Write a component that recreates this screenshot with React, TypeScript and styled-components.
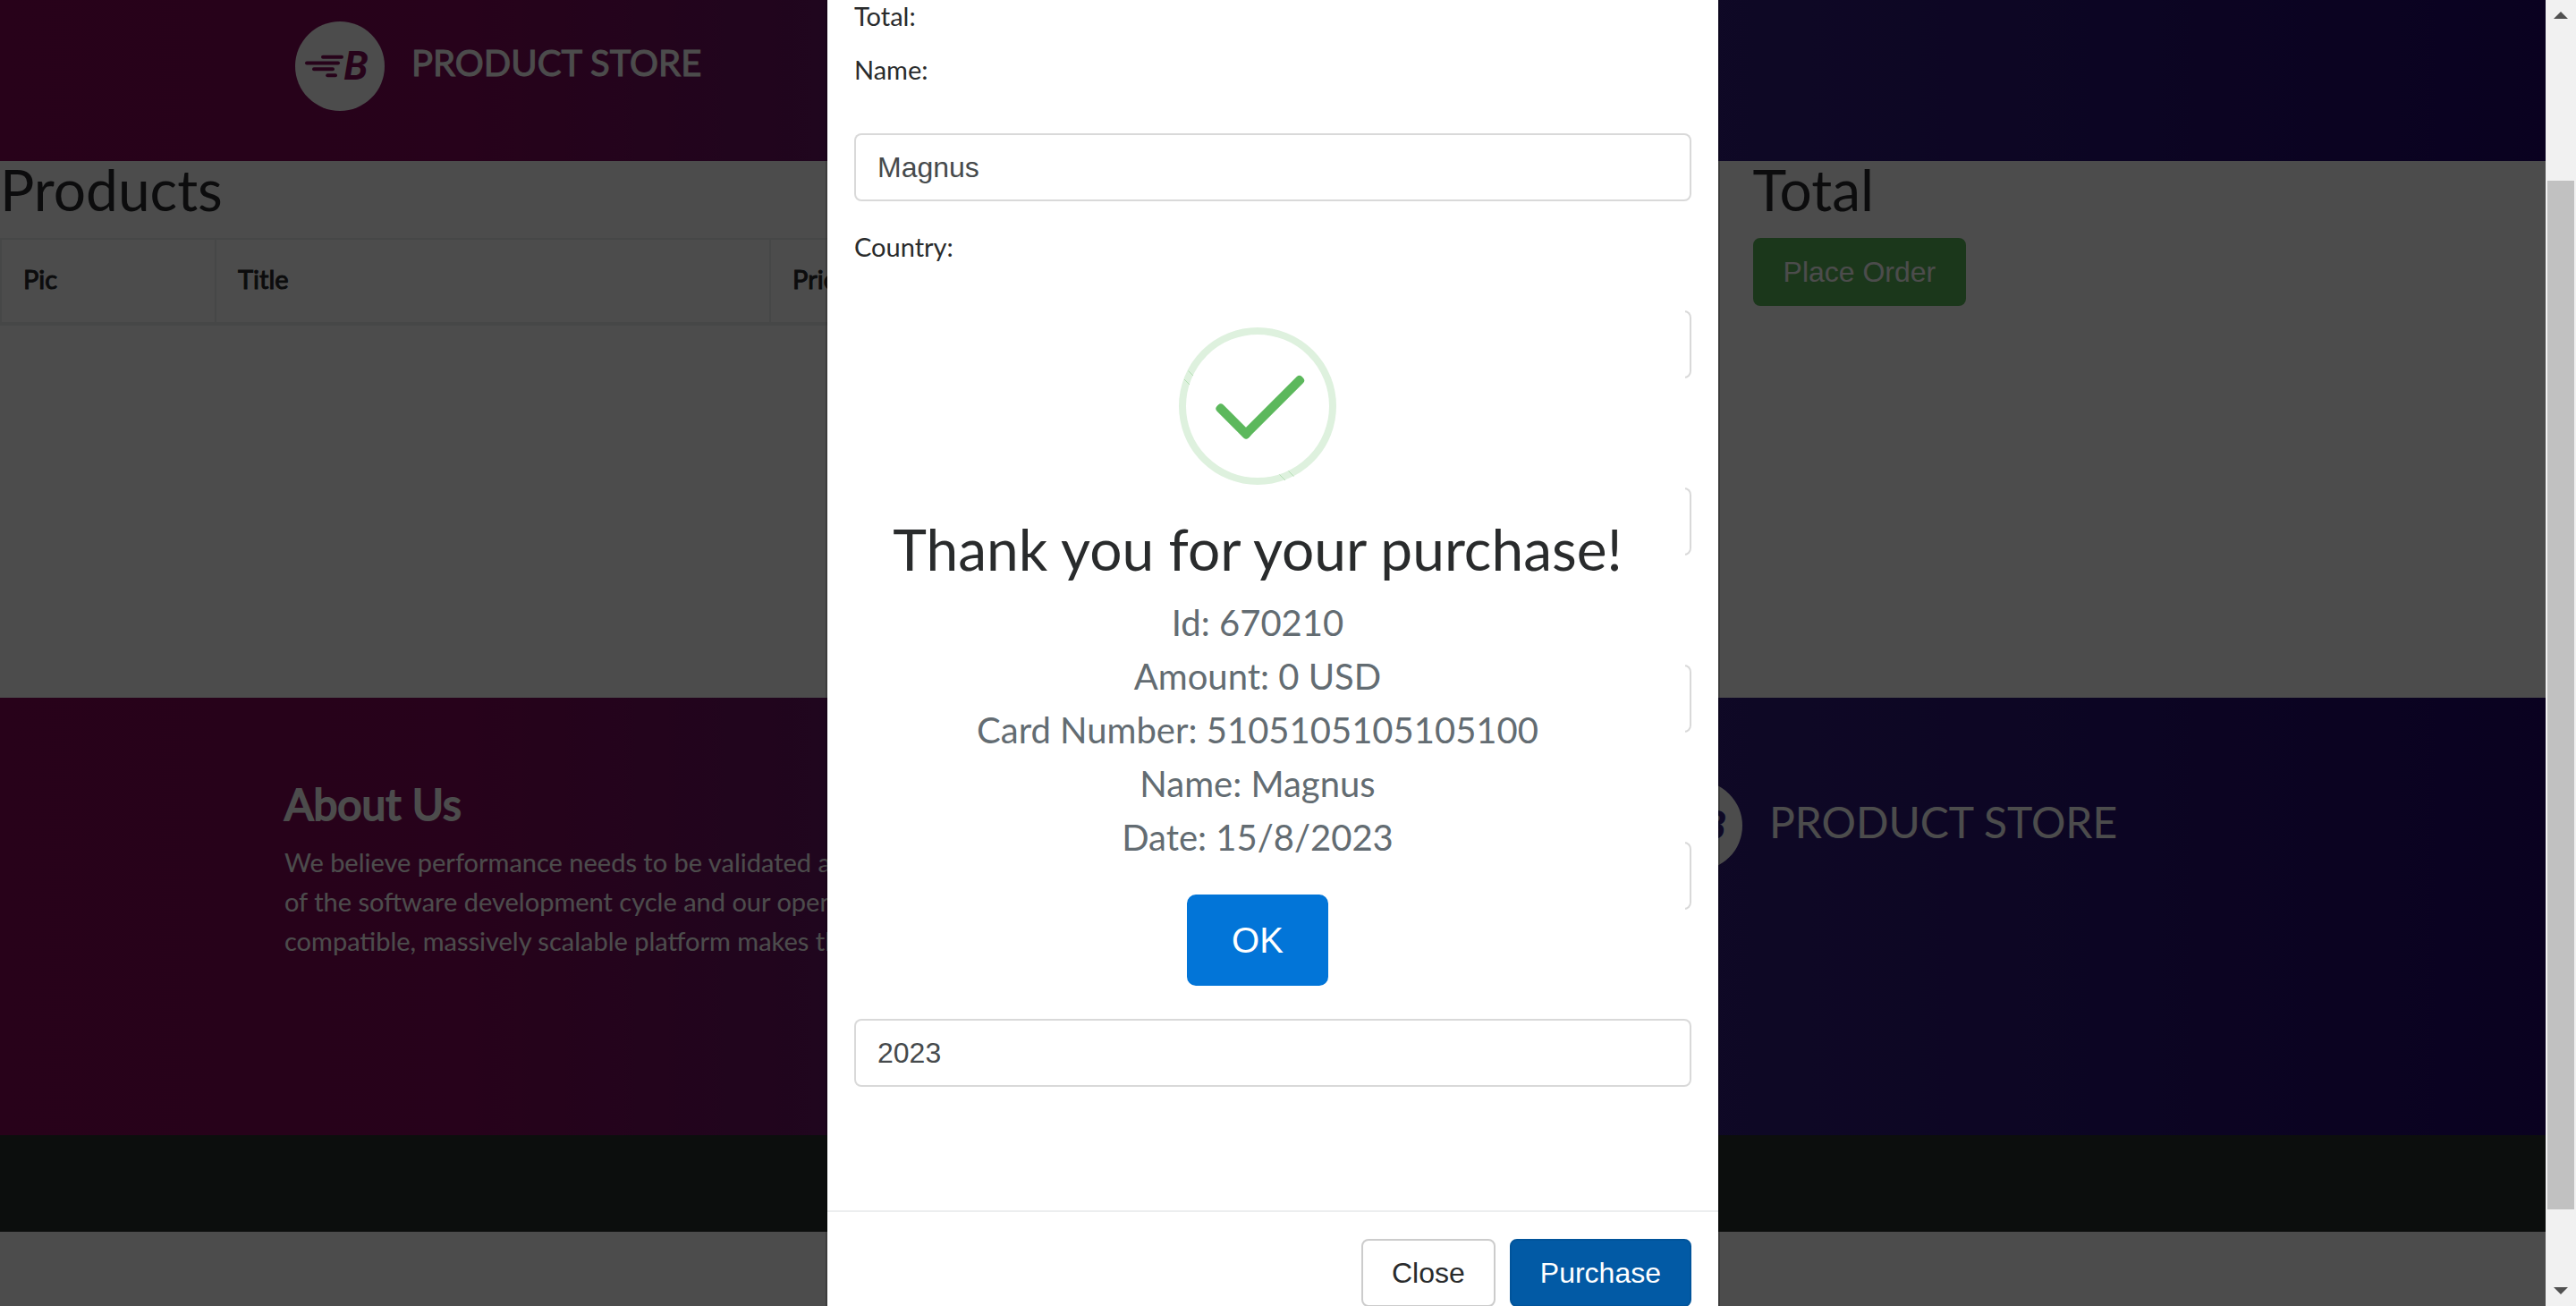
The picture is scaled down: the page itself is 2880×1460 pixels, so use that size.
import React from "react";
import styled, { createGlobalStyle } from "styled-components";

const lato = `Lato, "Noto Sans", sans-serif`;
const arial = `"Liberation Sans", Arial, sans-serif`;
const ink = "#292b2c";

const GlobalStyle = createGlobalStyle`
  *, *::before, *::after { box-sizing: border-box; }
  body {
    margin: 0;
    background: #fff;
    color: ${ink};
    font-family: ${lato};
    font-size: 29px;
    line-height: 36px;
  }
  h1, h2, h3, p { margin: 0; font-weight: 400; }
`;

/* ---------- window frame ---------- */

const Window = styled.div`
  display: flex;
  height: 100vh;
  overflow: hidden;
`;

const Viewport = styled.div`
  position: relative;
  flex: 1;
  overflow: hidden;
`;

const Scrollbar = styled.div`
  display: flex;
  flex-direction: column;
  width: 34px;
  padding: 0 2px;
  background: #f1f1f1;
`;

const ScrollArrow = styled.div<{ $down?: boolean }>`
  display: flex;
  align-items: center;
  justify-content: center;
  height: 34px;

  &::before {
    content: "";
    border: 8px solid transparent;
    border-top: ${(p) => (p.$down ? "8px solid #505050" : "0")};
    border-bottom: ${(p) => (p.$down ? "0" : "8px solid #505050")};
  }
`;

const ScrollGap = styled.div<{ $share: number }>`
  flex: ${(p) => p.$share};
`;

const ScrollThumb = styled.div`
  flex: 1150;
  background: #c1c1c1;
`;

/* ---------- store page ---------- */

const brandGradient = `linear-gradient(90deg, #850757 0%, #83085a 18%, #6b1464 32%, #321e7f 67%, #22066c 100%)`;

const Header = styled.header`
  height: 180px;
  background: ${brandGradient};
`;

const HeaderInner = styled.div`
  max-width: 2280px;
  margin: 0 auto;
  padding: 24px 47px;
`;

const Brand = styled.a<{ $large?: boolean }>`
  display: flex;
  align-items: flex-start;
  gap: 30px;
  color: #fff;
  font-size: ${(p) => (p.$large ? 48 : 40)}px;
  -webkit-text-stroke: ${(p) => (p.$large ? 0 : 1)}px #fff;
  line-height: 92px;
  text-decoration: none;
`;

const LogoMark = styled.svg`
  flex: none;
  width: 100px;
  height: 100px;
  -webkit-text-stroke: 0;
`;

const Main = styled.main`
  display: grid;
  grid-template-columns: 15fr 7fr;
  gap: 60px;
  align-items: start;
  min-height: 600px;
`;

const Heading = styled.h2`
  padding-bottom: 22px;
  font-size: 64px;
  line-height: 64px;
`;

const ProductTable = styled.table`
  width: 100%;
  border: 2px solid #eceeef;
  border-bottom: 0;
  border-collapse: separate;
  border-spacing: 0;
  table-layout: fixed;
`;

const Th = styled.th<{ $width?: string }>`
  width: ${(p) => p.$width ?? "auto"};
  padding: 26px 24px 30px;
  border-bottom: 4px solid #eceeef;
  font-weight: 400;
  -webkit-text-stroke: 1px ${ink};
  text-align: left;

  & + & { border-left: 2px solid #eceeef; }
`;

const Button = styled.button<{ $tone: string; $border?: string; $color?: string; $large?: boolean }>`
  padding: ${(p) => (p.$large ? "24px 48px" : "16px 32px")};
  border: 2px solid ${(p) => p.$border ?? p.$tone};
  border-radius: ${(p) => (p.$large ? 10 : 8)}px;
  background: ${(p) => p.$tone};
  color: ${(p) => p.$color ?? "#fff"};
  font-family: ${arial};
  font-size: ${(p) => (p.$large ? 40 : 32)}px;
  line-height: ${(p) => (p.$large ? 50 : 40)}px;
  white-space: nowrap;
`;

const Footer = styled.footer`
  background: ${brandGradient};
`;

const FooterInner = styled.div`
  display: grid;
  grid-template-columns: 9fr 4fr;
  align-items: start;
  max-width: 2280px;
  min-height: 489px;
  margin: 0 auto;
  padding: 93px 35px 0;
`;

const AboutTitle = styled.h3`
  padding-bottom: 17px;
  color: #fff;
  font-size: 48px;
  -webkit-text-stroke: 2px #fff;
  line-height: 52px;
`;

const AboutText = styled.p`
  max-width: 800px;
  color: #fff;
  line-height: 44px;
`;

const Copyright = styled.div`
  height: 108px;
  background: #282f2c;
`;

/* ---------- order dialog ---------- */

const Backdrop = styled.div`
  position: absolute;
  inset: 0;
  background: rgba(0, 0, 0, 0.7);
`;

const ModalLayer = styled.div`
  position: absolute;
  inset: 0;
  overflow: hidden;
`;

const Dialog = styled.section`
  width: 1000px;
  max-width: 100%;
  margin: 0 auto;
  border: 2px solid rgba(0, 0, 0, 0.2);
  border-top: 0;
  background: #fff;
  background-clip: padding-box;
`;

const DialogBody = styled.form`
  display: flex;
  flex-direction: column;
  padding: 0 30px 105px;
`;

const TotalLabel = styled.p`
  padding-bottom: 24px;
`;

const Field = styled.div`
  display: flex;
  flex-direction: column;
  gap: 53px;
  padding-bottom: 33px;
`;

const Input = styled.input`
  width: 100%;
  height: 76px;
  padding: 16px 24px;
  border: 2px solid rgba(0, 0, 0, 0.15);
  border-radius: 8px;
  background: #fff;
  background-clip: padding-box;
  color: #464a4c;
  font-family: ${arial};
  font-size: 32px;
  line-height: 40px;
`;

const DialogFooter = styled.footer`
  display: flex;
  justify-content: flex-end;
  gap: 16px;
  padding: 30px;
  border-top: 2px solid #eceeef;
`;

/* ---------- purchase confirmation ---------- */

const AlertLayer = styled.div`
  position: absolute;
  inset: 0;
  display: flex;
  align-items: center;
  justify-content: center;
  padding: 0 34px 32px 0;
`;

const Alert = styled.div`
  display: flex;
  flex-direction: column;
  align-items: center;
  width: 956px;
  max-width: 100%;
  padding: 34px;
  border-radius: 10px;
  background: #fff;
  text-align: center;
`;

const SuccessIcon = styled.svg`
  width: 176px;
  height: 176px;
  margin: 40px 0;
`;

const AlertTitle = styled.h2`
  padding-bottom: 20px;
  font-size: 64px;
  line-height: 64px;
  white-space: nowrap;
`;

const AlertText = styled.p`
  padding-bottom: 34px;
  color: #636c72;
  font-size: 40px;
  line-height: 60px;
`;

function Logo({ cut }: { cut: string }) {
  return (
    <LogoMark viewBox="0 0 100 100" aria-hidden="true">
      <circle cx="50" cy="50" r="50" fill="#fff" />
      <g stroke={cut} strokeWidth="4" strokeLinecap="round">
        <path d="M31 39.8H52" />
        <path d="M13 46.5H48" />
        <path d="M21 53.2H42" />
        <path d="M36.2 60.2H45" />
      </g>
      <text x="54.5" y="65.3" fill={cut} fontFamily="Roboto, sans-serif" fontSize="44" fontWeight="700" fontStyle="italic">
        B
      </text>
    </LogoMark>
  );
}

const fields = [
  { id: "name", label: "Name:", value: "Magnus" },
  { id: "country", label: "Country:", value: "" },
  { id: "city", label: "City:", value: "" },
  { id: "card", label: "Credit card:", value: "" },
  { id: "month", label: "Month:", value: "" },
  { id: "year", label: "Year:", value: "2023" },
];

const receipt = [
  "Id: 670210",
  "Amount: 0 USD",
  "Card Number: 5105105105105100",
  "Name: Magnus",
  "Date: 15/8/2023",
];

export default function App() {
  return (
    <Window>
      <GlobalStyle />
      <Viewport>
        <Header>
          <HeaderInner>
            <Brand href="#home">
              <Logo cut="#820b59" />
              PRODUCT STORE
            </Brand>
          </HeaderInner>
        </Header>

        <Main>
          <div>
            <Heading>Products</Heading>
            <ProductTable>
              <thead>
                <tr>
                  <Th $width="238px">Pic</Th>
                  <Th $width="620px">Title</Th>
                  <Th>Price</Th>
                </tr>
              </thead>
            </ProductTable>
          </div>
          <div>
            <Heading>Total</Heading>
            <Button type="button" $tone="#5cb85c">Place Order</Button>
          </div>
        </Main>

        <Footer>
          <FooterInner>
            <div>
              <AboutTitle>About Us</AboutTitle>
              <AboutText>
                We believe performance needs to be validated at every stage of the software
                development cycle and our open source compatible, massively scalable platform
                makes that a reality.
              </AboutText>
            </div>
            <Brand href="#home" $large>
              <Logo cut="#321e7f" />
              PRODUCT STORE
            </Brand>
          </FooterInner>
        </Footer>
        <Copyright />

        <Backdrop />

        <ModalLayer>
          <Dialog role="dialog" aria-label="Place order">
            <DialogBody>
              <TotalLabel>Total:</TotalLabel>
              {fields.map((f) => (
                <Field key={f.id}>
                  <label htmlFor={f.id}>{f.label}</label>
                  <Input id={f.id} type="text" defaultValue={f.value} />
                </Field>
              ))}
            </DialogBody>
            <DialogFooter>
              <Button type="button" $tone="#fff" $border="#ccc" $color={ink}>Close</Button>
              <Button type="button" $tone="#025aa5" $border="#01549b">Purchase</Button>
            </DialogFooter>
          </Dialog>
        </ModalLayer>

        <AlertLayer>
          <Alert role="alertdialog" aria-labelledby="alert-title">
            <SuccessIcon viewBox="0 0 176 176" aria-hidden="true">
              <circle cx="88" cy="88" r="84" fill="none" stroke="#def1de" strokeWidth="8" />
              <g stroke="#b4dfb4" strokeWidth="1">
                <path d="M10.5 48.5L16 54" />
                <path d="M6 58L12 64" />
                <path d="M112.5 164.5L119 171" />
                <path d="M122.5 160.5L128.5 166.5" />
              </g>
              <g fill="#5cb85c">
                <rect x="36" y="100" width="50" height="10" rx="4" transform="rotate(45 61 105)" />
                <rect x="58" y="84" width="94" height="10" rx="4" transform="rotate(-45 105 89)" />
              </g>
            </SuccessIcon>
            <AlertTitle id="alert-title">Thank you for your purchase!</AlertTitle>
            <AlertText>
              {receipt.map((line, i) => (
                <React.Fragment key={line}>
                  {i > 0 && <br />}
                  {line}
                </React.Fragment>
              ))}
            </AlertText>
            <Button type="button" $large $tone="#0275d8">OK</Button>
          </Alert>
        </AlertLayer>
      </Viewport>

      <Scrollbar aria-hidden="true">
        <ScrollArrow />
        <ScrollGap $share={168} />
        <ScrollThumb />
        <ScrollGap $share={74} />
        <ScrollArrow $down />
      </Scrollbar>
    </Window>
  );
}
